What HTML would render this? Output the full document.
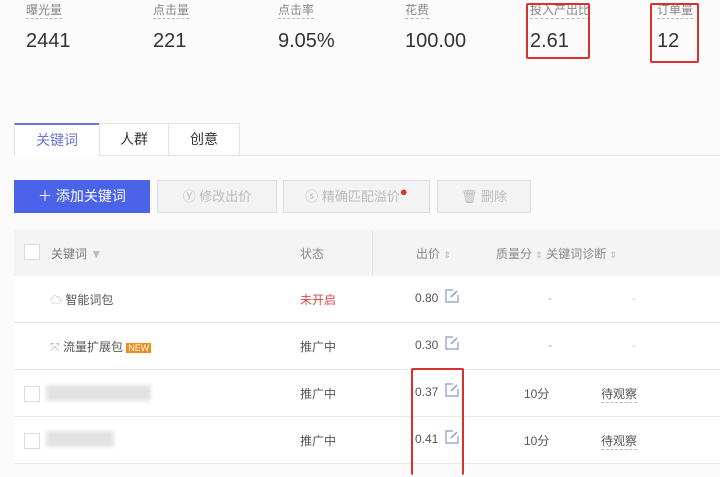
<!DOCTYPE html>
<html><head><meta charset="utf-8"><style>
html,body{margin:0;width:720px;height:477px;overflow:hidden}
body{background:#fbfbfb;position:relative;font-family:"Liberation Sans","Noto Sans CJK SC",sans-serif;color:#333}
.a{position:absolute;white-space:nowrap}
.lb{font-size:12px;color:#888;border-bottom:1px dashed #bbb;line-height:15px;top:3px}
.v{font-size:20px;color:#333;top:30px}
.red{position:absolute;border:2px solid #d9322e;border-radius:2px}
.btn{position:absolute;top:180px;height:31px;border:1px solid #ddd;background:#f3f3f3;color:#bbb;font-size:13px;line-height:31px;text-align:center}
.t{font-size:12px;color:#555}
.ln{position:absolute;left:14px;right:0;height:1px;background:#e8e8e8}
.cb{position:absolute;width:14px;height:14px;border:1px solid #ddd;background:#fff;left:24px}
.ed{position:absolute;width:14px;height:14px}
</style></head><body>
<div class="a lb" style="left:26px">曝光量</div>
<div class="a lb" style="left:153px">点击量</div>
<div class="a lb" style="left:278px">点击率</div>
<div class="a lb" style="left:405px">花费</div>
<div class="a lb" style="left:530px">投入产出比</div>
<div class="a lb" style="left:657px">订单量</div>
<div class="a v" style="left:26px">2441</div>
<div class="a v" style="left:153px">221</div>
<div class="a v" style="left:278px">9.05%</div>
<div class="a v" style="left:405px">100.00</div>
<div class="a v" style="left:530px">2.61</div>
<div class="a v" style="left:657px">12</div>
<div class="red" style="left:526px;top:3px;width:60px;height:52px"></div>
<div class="red" style="left:650px;top:3px;width:45px;height:56px"></div>

<div class="a" style="left:14px;top:155px;right:0;height:1px;background:#e3e3e3"></div>
<div class="a" style="left:14px;top:123px;width:85px;height:33px;background:#fff;border-top:2px solid #6a74d8;border-left:1px solid #e3e3e3;box-sizing:border-box;color:#6a74d8;font-size:14px;text-align:center;line-height:30px">关键词</div>
<div class="a" style="left:99px;top:123px;width:70px;height:32px;background:#fff;border:1px solid #e3e3e3;border-bottom:none;box-sizing:border-box;font-size:14px;text-align:center;line-height:30px">人群</div>
<div class="a" style="left:169px;top:123px;width:71px;height:32px;background:#fff;border:1px solid #e3e3e3;border-bottom:none;border-left:none;box-sizing:border-box;font-size:14px;text-align:center;line-height:30px">创意</div>

<div class="btn" style="left:14px;width:134px;background:#4a63e8;border-color:#4a63e8;color:#fff;font-size:14px">＋ 添加关键词</div>
<div class="btn" style="left:157px;width:118px">Ⓨ 修改出价</div>
<div class="btn" style="left:283px;width:145px">ⓢ 精确匹配溢价<span style="color:#d33;position:relative;top:-5px">●</span></div>
<div class="btn" style="left:437px;width:92px">🗑 删除</div>

<div class="a" style="left:14px;top:230px;right:0;height:46px;background:#f4f4f4"></div>
<div class="a" style="left:372px;top:230px;width:1px;height:46px;background:#e6e6e6"></div>
<div class="cb" style="top:244px"></div>
<div class="a t" style="left:51px;top:245px;color:#777">关键词 <span style="color:#bbb">▼</span></div>
<div class="a t" style="left:300px;top:245px;color:#888">状态</div>
<div class="a t" style="left:416px;top:245px;color:#888">出价 <span style="color:#bbb;font-size:9px">⇕</span></div>
<div class="a t" style="left:496px;top:245px;color:#888">质量分 <span style="color:#bbb;font-size:9px">⇕</span> 关键词诊断 <span style="color:#bbb;font-size:9px">⇕</span></div>

<div class="a" style="left:14px;top:276px;right:0;height:187px;background:#fff"></div>
<div class="ln" style="top:322px"></div><div class="ln" style="top:369px"></div><div class="ln" style="top:416px"></div><div class="ln" style="top:463px"></div>

<div class="a t" style="left:50px;top:291px"><span style="color:#aaa">☁</span> 智能词包</div>
<div class="a t" style="left:300px;top:291px;color:#d94a4a">未开启</div>
<div class="a t" style="left:415px;top:291px">0.80</div>
<svg class="ed" style="left:445px;top:289px" viewBox="0 0 14 14"><path d="M8 1H1V13H13V6" fill="none" stroke="#8899cc" stroke-width="1.2"/><path d="M6 8L12 2" stroke="#8899cc" stroke-width="1.4"/></svg>
<div class="a t" style="left:548px;top:291px;color:#aaa">-</div><div class="a t" style="left:632px;top:291px;color:#ccc">-</div>

<div class="a t" style="left:50px;top:338px"><span style="color:#aaa">⤧</span> 流量扩展包 <span style="background:#f08c1e;color:#fff;font-size:9px;padding:0 2px">NEW</span></div>
<div class="a t" style="left:300px;top:338px">推广中</div>
<div class="a t" style="left:415px;top:338px">0.30</div>
<svg class="ed" style="left:445px;top:336px" viewBox="0 0 14 14"><path d="M8 1H1V13H13V6" fill="none" stroke="#8899cc" stroke-width="1.2"/><path d="M6 8L12 2" stroke="#8899cc" stroke-width="1.4"/></svg>
<div class="a t" style="left:548px;top:338px;color:#aaa">-</div><div class="a t" style="left:632px;top:338px;color:#ccc">-</div>

<div class="cb" style="top:386px"></div>
<div class="a" style="left:46px;top:385px;width:105px;height:16px;background:#e2e2e2;filter:blur(2px)"></div>
<div class="a t" style="left:300px;top:385px">推广中</div>
<div class="a t" style="left:415px;top:385px">0.37</div>
<svg class="ed" style="left:445px;top:383px" viewBox="0 0 14 14"><path d="M8 1H1V13H13V6" fill="none" stroke="#8899cc" stroke-width="1.2"/><path d="M6 8L12 2" stroke="#8899cc" stroke-width="1.4"/></svg>
<div class="a t" style="left:524px;top:385px">10分</div>
<div class="a t" style="left:601px;top:385px;border-bottom:1px dashed #bbb">待观察</div>

<div class="cb" style="top:433px"></div>
<div class="a" style="left:46px;top:431px;width:68px;height:16px;background:#e2e2e2;filter:blur(2px)"></div>
<div class="a t" style="left:300px;top:432px">推广中</div>
<div class="a t" style="left:415px;top:432px">0.41</div>
<svg class="ed" style="left:445px;top:430px" viewBox="0 0 14 14"><path d="M8 1H1V13H13V6" fill="none" stroke="#8899cc" stroke-width="1.2"/><path d="M6 8L12 2" stroke="#8899cc" stroke-width="1.4"/></svg>
<div class="a t" style="left:524px;top:432px">10分</div>
<div class="a t" style="left:601px;top:432px;border-bottom:1px dashed #bbb">待观察</div>

<div class="red" style="left:411px;top:368px;width:49px;height:105px;border-bottom:none"></div>
</body></html>
